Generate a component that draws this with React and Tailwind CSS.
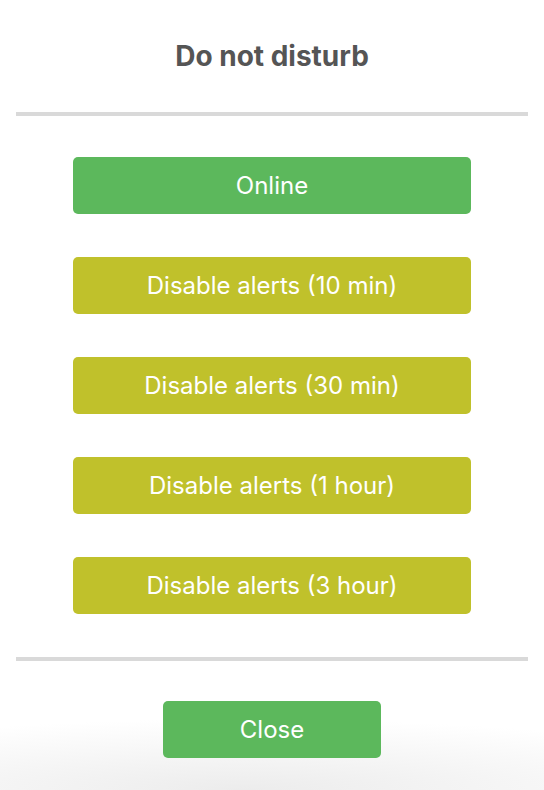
// Do not disturb – status picker dialog
const options = [
  { label: 'Online', color: 'bg-[#5cb85c]' },
  { label: 'Disable alerts (10 min)', color: 'bg-[#c0c12b]' },
  { label: 'Disable alerts (30 min)', color: 'bg-[#c0c12b]' },
  { label: 'Disable alerts (1 hour)', color: 'bg-[#c0c12b]' },
  { label: 'Disable alerts (3 hour)', color: 'bg-[#c0c12b]' },
];

const App = () => {
  return (
    <div className="relative flex flex-col w-full h-[790px] bg-white overflow-hidden font-['Inter',sans-serif]">
      {/* Header */}
      <div className="h-[112px] flex items-center justify-center">
        <h1 className="text-[28px] font-bold text-[#555555] leading-none">Do not disturb</h1>
      </div>
      <div className="mx-4 h-[4px] bg-[#d9d9d9]" />

      {/* Options */}
      <div className="flex flex-col items-center gap-[43px] pt-[41px] pb-[43px]">
        {options.map((o) => (
          <button
            key={o.label}
            className={`w-[398px] h-[57px] rounded-[5px] ${o.color} text-white text-[24px] leading-none`}
          >
            {o.label}
          </button>
        ))}
      </div>
      <div className="mx-4 h-[4px] bg-[#d9d9d9]" />

      {/* Footer */}
      <div className="relative flex-1 flex justify-center pt-[40px] bg-[radial-gradient(ellipse_100%_55%_at_45%_100%,#ececec,#ffffff)]">
        <button className="w-[218px] h-[57px] rounded-[5px] bg-[#5cb85c] text-white text-[24px] leading-none">
          Close
        </button>
      </div>
    </div>
  );
};

export default App;
